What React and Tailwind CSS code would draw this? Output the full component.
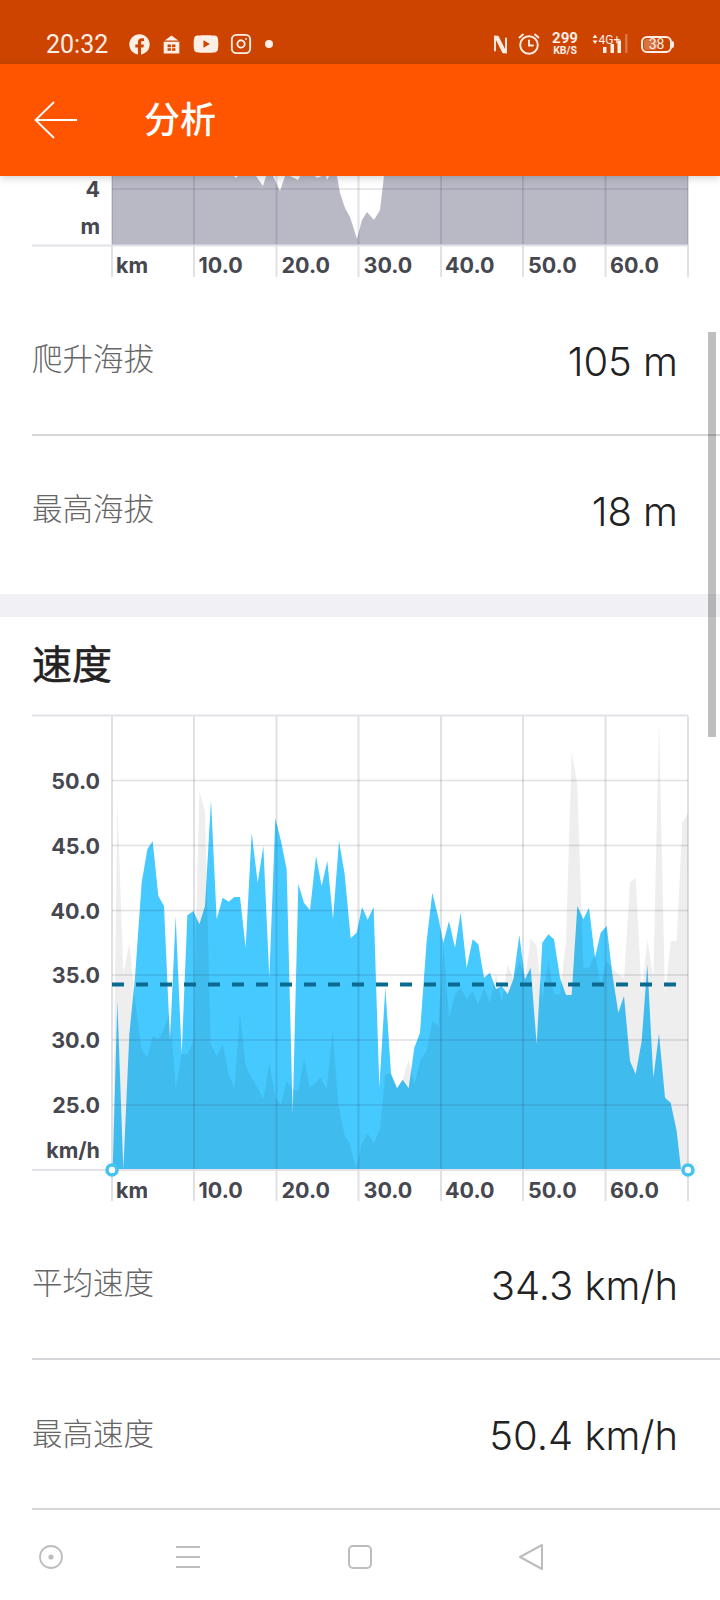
import { Instagram } from "lucide-react";
import { FaFacebook, FaYoutube } from "react-icons/fa";

// traced from the picture at 3x, x from the left edge and y from 700
const speedPoints = [
  [338, 1405], [352, 900], [370, 1405], [388, 1000], [405, 830], [425, 545], [442, 445], [458, 420],
  [475, 585], [492, 615], [510, 1020], [527, 645], [545, 1060], [562, 643], [580, 630], [598, 670],
  [615, 615], [633, 298], [650, 655], [668, 590], [686, 602], [703, 588], [720, 588], [737, 740],
  [755, 395], [773, 545], [790, 435], [808, 830], [826, 352], [843, 420], [860, 505], [878, 1240],
  [895, 548], [912, 605], [930, 628], [948, 465], [965, 555], [982, 480], [999, 655], [1017, 420],
  [1034, 520], [1052, 712], [1070, 695], [1086, 618], [1103, 656], [1121, 618], [1138, 1160],
  [1156, 860], [1173, 1118], [1191, 1162], [1208, 1136], [1226, 1162], [1243, 1040], [1260, 995],
  [1280, 720], [1297, 575], [1315, 650], [1330, 725], [1347, 660], [1365, 740], [1382, 635],
  [1400, 800], [1418, 715], [1435, 730], [1452, 830], [1470, 815], [1488, 865], [1505, 855],
  [1523, 880], [1540, 835], [1558, 703], [1575, 835], [1592, 800], [1610, 1030], [1627, 725],
  [1645, 700], [1662, 715], [1680, 830], [1698, 882], [1715, 882], [1732, 615], [1750, 655],
  [1767, 620], [1785, 770], [1802, 695], [1820, 675], [1837, 820], [1855, 935], [1872, 885],
  [1890, 1080], [1907, 1120], [1925, 1020], [1942, 790], [1960, 1130], [1977, 998], [1995, 1190],
  [2012, 1205], [2030, 1290], [2043, 1405],
];

const greyPoints = [
  [338, 1405], [352, 300], [370, 815], [388, 725], [405, 900], [425, 1045], [442, 1070], [458, 1005],
  [475, 1015], [492, 985], [510, 930], [527, 1160], [545, 1060], [562, 1060], [580, 1020], [598, 270],
  [615, 330], [632, 1030], [650, 1065], [668, 1030], [686, 1120], [703, 1160], [720, 935], [737, 1095],
  [755, 1130], [773, 1160], [790, 1195], [808, 1085], [826, 1190], [843, 1210], [860, 1140], [878, 1165],
  [895, 1170], [912, 1075], [930, 1160], [962, 1130], [980, 1165], [998, 990], [1015, 1210], [1033, 1300],
  [1050, 1330], [1068, 1402], [1085, 1330], [1103, 1297], [1122, 1327], [1140, 1280], [1156, 1120],
  [1173, 1118], [1191, 1162], [1208, 1136], [1226, 1075], [1243, 1150], [1262, 1075], [1280, 1050],
  [1297, 960], [1315, 975], [1330, 730], [1347, 950], [1365, 880], [1382, 860], [1400, 895], [1418, 870],
  [1435, 910], [1452, 860], [1470, 905], [1488, 815], [1505, 905], [1523, 790], [1540, 835], [1558, 780],
  [1575, 835], [1592, 712], [1610, 735], [1627, 900], [1645, 780], [1662, 880], [1680, 880], [1698, 720],
  [1715, 150], [1732, 250], [1750, 800], [1767, 800], [1785, 760], [1802, 850], [1820, 780], [1837, 800],
  [1855, 820], [1872, 830], [1890, 545], [1907, 530], [1925, 880], [1942, 715], [1960, 830], [1977, 55],
  [1995, 880], [2012, 720], [2030, 720], [2047, 365], [2065, 335], [2065, 1405],
];

// elevation outline, real page pixels
const elevationPoints = [
  [112, 245], [112, 176], [234, 176], [236, 178], [238, 176], [256, 176], [263, 186], [266, 176],
  [273, 176], [280, 191], [285, 176], [290, 176], [298, 180], [300, 176], [315, 176], [317, 178],
  [322, 176], [326, 176], [327, 180], [329, 176], [337, 176], [340, 193], [345, 208], [350, 217],
  [357, 239], [362, 220], [367, 212], [374, 220], [380, 210], [384, 176], [688, 176], [688, 245],
];

const gridX = [112, 194, 276.5, 358.5, 441, 523, 605.5, 688];
const speedTicks = [
  { label: "50.0", y: 779.5 },
  { label: "45.0", y: 844.5 },
  { label: "40.0", y: 909.5 },
  { label: "35.0", y: 974 },
  { label: "30.0", y: 1039 },
  { label: "25.0", y: 1104 },
];
const kmLabels = [
  { label: "10.0", x: 198.5 },
  { label: "20.0", x: 281.5 },
  { label: "30.0", x: 363.5 },
  { label: "40.0", x: 445 },
  { label: "50.0", x: 528 },
  { label: "60.0", x: 610 },
];

function toPoints(list) {
  return list.map(([x, y]) => `${x / 3},${700 + y / 3}`).join(" ");
}

function StatusBar() {
  return (
    <div className="flex h-[64px] items-center justify-between bg-[#cc4400] pt-[24px] pl-[46px] pr-[46px] text-[#fdeee6]">
      <div className="flex items-center">
        <span className="text-[25px] leading-none font-[family-name:Roboto,sans-serif]">20:32</span>
        <FaFacebook className="ml-[21px]" size={21} />
        <svg className="ml-[12px]" width="19" height="19" viewBox="0 0 17 17" fill="currentColor">
          <path d="M8.5 0.5 14.5 5H2.5z" />
          <path fillRule="evenodd" d="M1.5 6h14v10.5h-14zM5 8.5v2.4h3v-2.4zM9 8.5v2.4h3v-2.4zM5 11.8v2.4h3v-2.4zM9 11.8v2.4h3v-2.4z" />
        </svg>
        <FaYoutube className="ml-[12px]" size={26} />
        <Instagram className="ml-[11px]" size={22} strokeWidth={2} />
        <span className="ml-[13px] h-[8px] w-[8px] rounded-full bg-[#fdeee6]" />
      </div>
      <div className="flex items-center">
        <svg width="15" height="21" viewBox="0 0 15 21" fill="currentColor" stroke="currentColor" strokeWidth="1.4" strokeLinejoin="round">
          <path d="M2 2.5 5 2.5 13 18.5 10 18.5z" />
          <path d="M2 2.5V16.5M13 18.5V4.5" fill="none" strokeWidth="1.9" strokeLinecap="round" />
        </svg>
        <svg className="ml-[10px]" width="22" height="24" viewBox="0 0 22 24" fill="none" stroke="currentColor" strokeWidth="1.9" strokeLinecap="round">
          <circle cx="11" cy="13" r="8.8" />
          <path d="M11 8.5v5h4" />
          <path d="M1.5 5.5 5 2.5M20.5 5.5 17 2.5" />
        </svg>
        <div className="ml-[9px] flex w-[32px] flex-col items-center font-bold leading-none font-[family-name:Roboto,sans-serif]">
          <span className="text-[15px] leading-[14px]">299</span>
          <span className="text-[10.5px] leading-[12px]">KB/S</span>
        </div>
        <svg className="ml-[11px]" width="36" height="24" viewBox="0 0 36 24" fill="currentColor">
          <path d="M3 2.5 5.5 6H.5zM3 12 .5 8.5h5z" />
          <text x="6.5" y="11.5" fontSize="12" fontFamily="Roboto, sans-serif">4G+</text>
          <rect x="11" y="15" width="3.5" height="6" />
          <rect x="18.5" y="12" width="3.5" height="9" />
          <rect x="25.5" y="8.5" width="3.5" height="12.5" />
          <rect x="33" y="2" width="2.5" height="19" opacity="0.3" />
        </svg>
        <div className="relative ml-[13px] flex h-[17px] w-[31px] items-center justify-center rounded-[6px] border-2 border-[#fdeee6] text-[14px] leading-none font-[family-name:Roboto,sans-serif]">
          <span className="absolute left-[1px] top-[1px] h-[11px] w-[13px] rounded-[3px] bg-white/25" />
          <span className="relative">38</span>
        </div>
        <span className="h-[7px] w-[2px] rounded-r-sm bg-[#fdeee6]" />
      </div>
    </div>
  );
}

function Header() {
  return (
    <div className="relative z-10 flex h-[112px] items-center bg-[#ff5500] shadow-[0_2px_8px_rgba(0,0,0,0.18)]">
      <svg className="ml-[34px]" width="44" height="38" viewBox="0 0 44 38" fill="none" stroke="#fff" strokeWidth="1.8">
        <path d="M20 1 1.5 19 20 37M1.5 19H43" />
      </svg>
      <span className="ml-[66px] text-[36px] leading-none font-medium text-white">分析</span>
    </div>
  );
}

function GridLines({ top, bottom, lines }) {
  return (
    <g stroke="#28284a" strokeOpacity="0.14">
      {gridX.map((x) => (
        <line key={x} x1={x} x2={x} y1={top} y2={bottom} strokeWidth="2" />
      ))}
      {lines.map((y) => (
        <line key={y} x1={112} x2={688} y1={y} y2={y} strokeWidth="1.6" />
      ))}
    </g>
  );
}

function KmLabels({ y }) {
  return (
    <g className="fill-[#47474f] text-[21.5px] font-bold">
      <text x="116" y={y}>km</text>
      {kmLabels.map((item) => (
        <text key={item.label} x={item.x} y={y}>
          {item.label}
        </text>
      ))}
    </g>
  );
}

function ElevationChart() {
  return (
    <svg className="block" width="720" height="101" viewBox="0 176 720 101">
      <polygon points={elevationPoints.map((p) => p.join(",")).join(" ")} fill="#46486a" fillOpacity="0.38" />
      <GridLines top={176} bottom={277} lines={[189]} />
      <line x1="32" x2="688" y1="245.5" y2="245.5" stroke="#e2e2e8" strokeWidth="2" />
      <g className="fill-[#47474f] text-[21.5px] font-bold" textAnchor="end">
        <text x="100" y="197">4</text>
        <text x="100" y="234">m</text>
      </g>
      <KmLabels y={272.5} />
    </svg>
  );
}

function SpeedChart() {
  return (
    <svg className="block" width="720" height="488" viewBox="0 712 720 488">
      <polygon points={toPoints(speedPoints)} fill="#45c9ff" />
      <polygon points={toPoints(greyPoints)} fill="#000" fillOpacity="0.068" />
      <GridLines top={714.5} bottom={1200} lines={speedTicks.map((t) => t.y)} />
      <line x1="32" x2="688" y1="714.5" y2="714.5" stroke="#e2e2e8" strokeWidth="2" />
      <line x1="32" x2="688" y1="1169" y2="1169" stroke="#e2e2e8" strokeWidth="2" />
      <line x1="112" x2="676" y1="983.5" y2="983.5" stroke="#0b6a90" strokeWidth="4" strokeDasharray="12 12" />
      <g className="fill-[#47474f] text-[21.5px] font-bold" textAnchor="end">
        {speedTicks.map((t) => (
          <text key={t.label} x="100" y={t.y + 8}>
            {t.label}
          </text>
        ))}
        <text x="100" y="1157">km/h</text>
      </g>
      <KmLabels y={1196.5} />
      <circle cx="112" cy="1169" r="5" fill="#fff" stroke="#45c3ee" strokeWidth="3.5" />
      <circle cx="688" cy="1169" r="5" fill="#fff" stroke="#45c3ee" strokeWidth="3.5" />
    </svg>
  );
}

function StatRow({ label, value, height, divider }) {
  return (
    <div className={`ml-[32px] flex items-center justify-between pr-[42px] ${height} ${divider ? "border-b-2 border-[#d6d6da]" : ""}`}>
      <span className="text-[30.5px] leading-none font-light text-[#666666]">{label}</span>
      <span className="translate-y-[2px] text-[40px] leading-none font-light text-[#222222]">{value}</span>
    </div>
  );
}

function NavBar() {
  return (
    <div className="flex h-[91px] items-center pt-[3px] pl-[39px] text-[#bdbdbd]">
      <svg width="24" height="24" viewBox="0 0 24 24" fill="none" stroke="currentColor" strokeWidth="1.8">
        <circle cx="12" cy="12" r="11" />
        <circle cx="12" cy="12" r="2.6" fill="currentColor" stroke="none" />
      </svg>
      <svg className="ml-[113px]" width="24" height="24" viewBox="0 0 24 24" stroke="currentColor" strokeWidth="2">
        <path d="M0 2h24M0 12h24M0 22h24" />
      </svg>
      <span className="ml-[148px] h-[24px] w-[24px] rounded-[5px] border-2 border-current" />
      <svg className="ml-[146px]" width="26" height="28" viewBox="0 0 26 28" fill="none" stroke="currentColor" strokeWidth="2" strokeLinejoin="round">
        <path d="M24 2 2 14l22 12z" />
      </svg>
    </div>
  );
}

export default function App() {
  return (
    <div className="relative h-[1600px] w-[720px] overflow-hidden bg-white font-[family-name:Inter,'Noto_Sans_CJK_SC',sans-serif]">
      <StatusBar />
      <Header />
      <ElevationChart />
      <StatRow label="爬升海拔" value="105 m" height="h-[159px] pt-[8px]" divider />
      <StatRow label="最高海拔" value="18 m" height="h-[147px] mb-[11px]" />
      <div className="h-[23px] bg-[#f1f1f5]" />
      <div className="flex h-[96px] items-center pl-[32px]">
        <h2 className="text-[40px] leading-none font-normal text-[#222222] [-webkit-text-stroke:0.5px_#222222]">速度</h2>
      </div>
      <SpeedChart />
      <StatRow label="平均速度" value="34.3 km/h" height="h-[159px] pt-[8px]" divider />
      <StatRow label="最高速度" value="50.4 km/h" height="h-[150px]" divider />
      <NavBar />
      {/* scrollbar sits on top of the page */}
      <div className="absolute left-[708px] top-[332px] h-[405px] w-[8px] bg-black/25" />
    </div>
  );
}
